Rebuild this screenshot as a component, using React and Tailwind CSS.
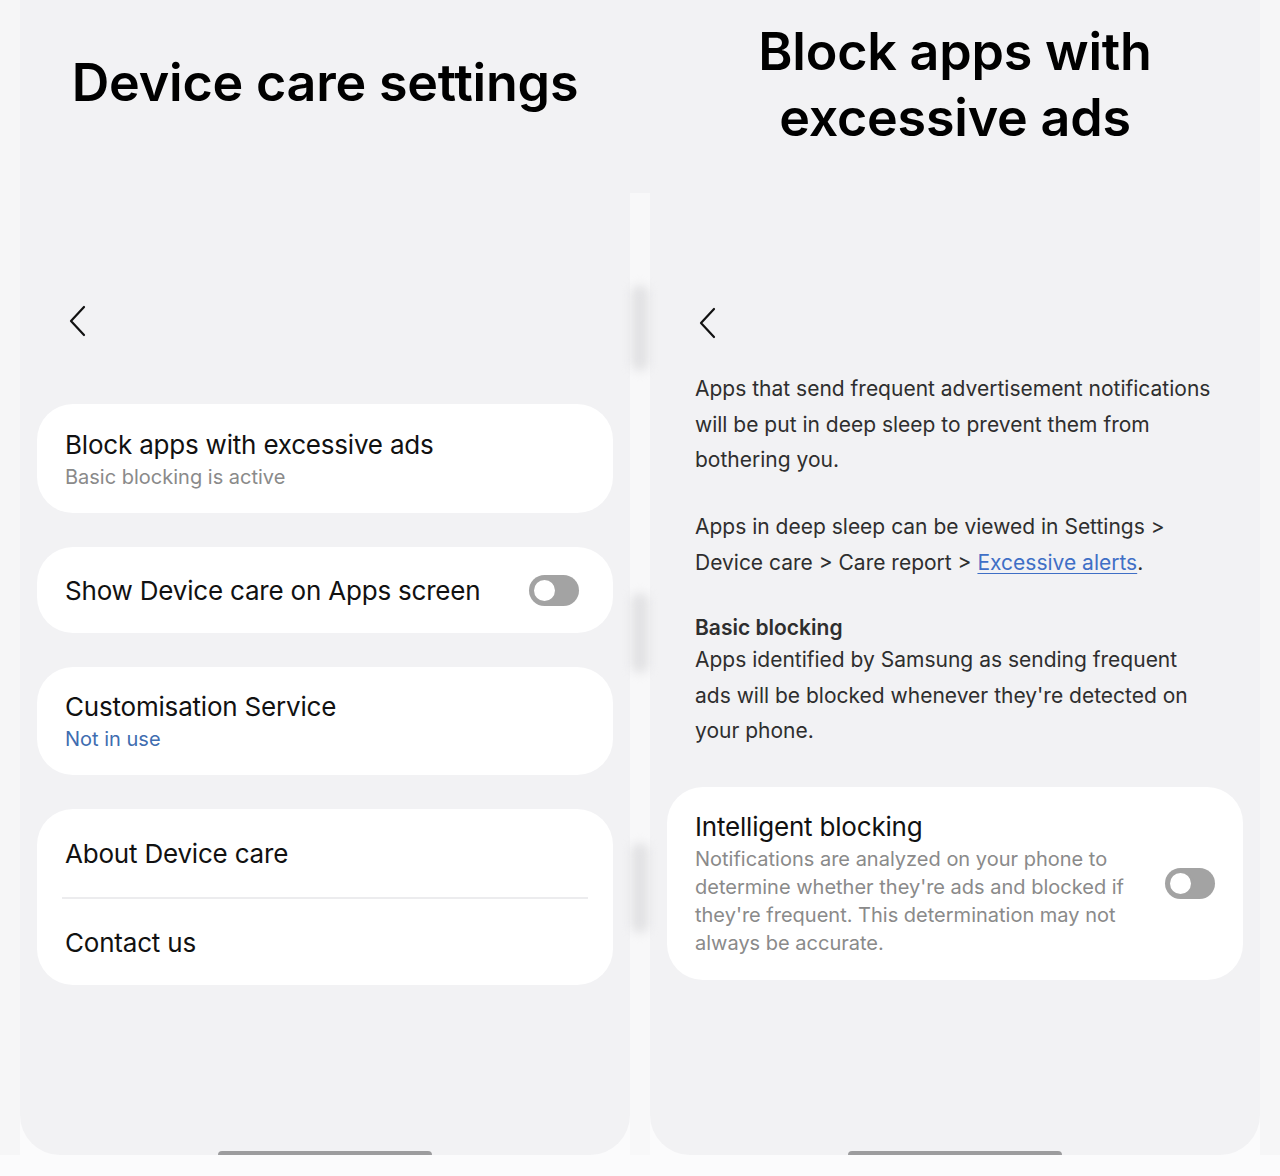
import React from "react";

// Two Samsung-style settings screens side by side
const body = { fontFamily: "Inter, 'Noto Sans', sans-serif" };

function Chevron() {
  return (
    <svg width="20" height="32" viewBox="0 0 20 32" fill="none">
      <path d="M17 2 L4 16 L17 30" stroke="#111" strokeWidth="2.2" strokeLinecap="round" strokeLinejoin="round" />
    </svg>
  );
}

function Toggle() {
  return (
    <div className="flex h-[31px] w-[50px] shrink-0 items-center rounded-full bg-[#a3a3a3] px-[2px]">
      <div className="h-[27px] w-[27px] rounded-full border-[3px] border-[#a3a3a3] bg-white" />
    </div>
  );
}

function Blob({ top, height }) {
  return (
    <div
      className="mx-[1px] shrink-0 rounded-full bg-[#e2e2e4] blur-[5px]"
      style={{ marginTop: top, height }}
    />
  );
}

export default function App() {
  return (
    <div className="flex h-[1176px] w-[1280px] flex-col overflow-hidden bg-[#fbfbfc]" style={body}>
      <div className="flex h-[1155px]">
        <div className="w-[20px] bg-[#f6f6f7]" />

        {/* left screen */}
        <div className="flex w-[610px] flex-col rounded-b-[40px] bg-[#f2f2f4]">
          <div className="h-[290px] pt-[52px] text-center">
            <h1 className="text-[52px] font-semibold leading-[62px] tracking-[-0.2px] text-black">
              Device care settings
            </h1>
          </div>
          <div className="h-[60px] pl-[47px] pt-[15px]">
            <Chevron />
          </div>

          <div className="mt-[54px] flex flex-col gap-[34px] px-[17px] tracking-[-0.2px]">
            <div className="flex h-[109px] flex-col justify-center rounded-[36px] bg-white px-[28px]">
              <div className="text-[26px] leading-[33px] text-[#111]">Block apps with excessive ads</div>
              <div className="mt-[3px] text-[20px] leading-[26px] tracking-normal text-[#8a8a8a]">Basic blocking is active</div>
            </div>

            <div className="flex h-[86px] items-center justify-between rounded-[36px] bg-white pl-[28px] pr-[34px]">
              <div className="text-[26px] leading-[33px] text-[#111]">Show Device care on Apps screen</div>
              <Toggle />
            </div>

            <div className="flex h-[108px] flex-col justify-center rounded-[36px] bg-white px-[28px]">
              <div className="text-[26px] leading-[33px] text-[#111]">Customisation Service</div>
              <div className="mt-[3px] text-[20px] leading-[26px] tracking-normal text-[#3f6db0]">Not in use</div>
            </div>

            <div className="flex h-[176px] flex-col rounded-[36px] bg-white text-[26px] text-[#111]">
              <div className="flex h-[88px] items-center px-[28px]">About Device care</div>
              <div className="mx-[25px] h-[2px] bg-[#ececee]" />
              <div className="flex h-[86px] items-center px-[28px]">Contact us</div>
            </div>
          </div>

          <div className="mt-auto flex justify-center">
            <div className="h-[4px] w-[214px] rounded-t-sm bg-[#9c9c9e]" />
          </div>
        </div>

        {/* gap between screens */}
        <div className="flex w-[20px] flex-col">
          <div className="h-[193px] bg-[#f2f2f4]" />
          <div className="flex flex-1 flex-col bg-[#f8f8f9]">
            <Blob top={92} height={86} />
            <Blob top={222} height={80} />
            <Blob top={170} height={90} />
          </div>
        </div>

        {/* right screen */}
        <div className="flex w-[610px] flex-col rounded-b-[40px] bg-[#f2f2f4]">
          <div className="h-[290px] pt-[19px] text-center">
            <h1 className="text-[52px] font-semibold leading-[66px] tracking-[-0.2px] text-black">
              Block apps with
              <br />
              excessive ads
            </h1>
          </div>
          <div className="h-[60px] pl-[47px] pt-[17px]">
            <Chevron />
          </div>

          <div className="mt-[21px] w-[562px] pl-[45px] text-[21px] leading-[35.5px] text-[#2e2e2e]">
            <p>
              Apps that send frequent advertisement notifications will be put in deep sleep to prevent them from
              bothering you.
            </p>
            <p className="mt-[31.5px]">
              Apps in deep sleep can be viewed in Settings &gt;
              <br />
              Device care &gt; Care report &gt;{" "}
              <span className="text-[#3f6fc6] underline decoration-1 underline-offset-[3px]">Excessive alerts</span>.
            </p>
            <p className="mt-[33.5px] font-semibold leading-[28.5px]">Basic blocking</p>
            <p>
              Apps identified by Samsung as sending frequent
              <br />
              ads will be blocked whenever they're detected on
              <br />
              your phone.
            </p>
          </div>

          <div className="mx-[17px] mt-[38px] flex h-[193px] items-center rounded-[36px] bg-white pl-[28px] pr-[28px]">
            <div className="flex-1">
              <div className="text-[26px] leading-[33px] tracking-[-0.2px] text-[#111]">Intelligent blocking</div>
              <div className="mt-[2px] pr-[24px] text-[20px] leading-[28px] text-[#8a8a8a]">
                Notifications are analyzed on your phone to
                <br />
                determine whether they're ads and blocked if
                <br />
                they're frequent. This determination may not
                <br />
                always be accurate.
              </div>
            </div>
            <Toggle />
          </div>

          <div className="mt-auto flex justify-center">
            <div className="h-[4px] w-[214px] rounded-t-sm bg-[#9c9c9e]" />
          </div>
        </div>

        <div className="w-[20px] bg-[#f6f6f7]" />
      </div>
      <div className="flex-1 bg-[#fbfbfc]" />
    </div>
  );
}
